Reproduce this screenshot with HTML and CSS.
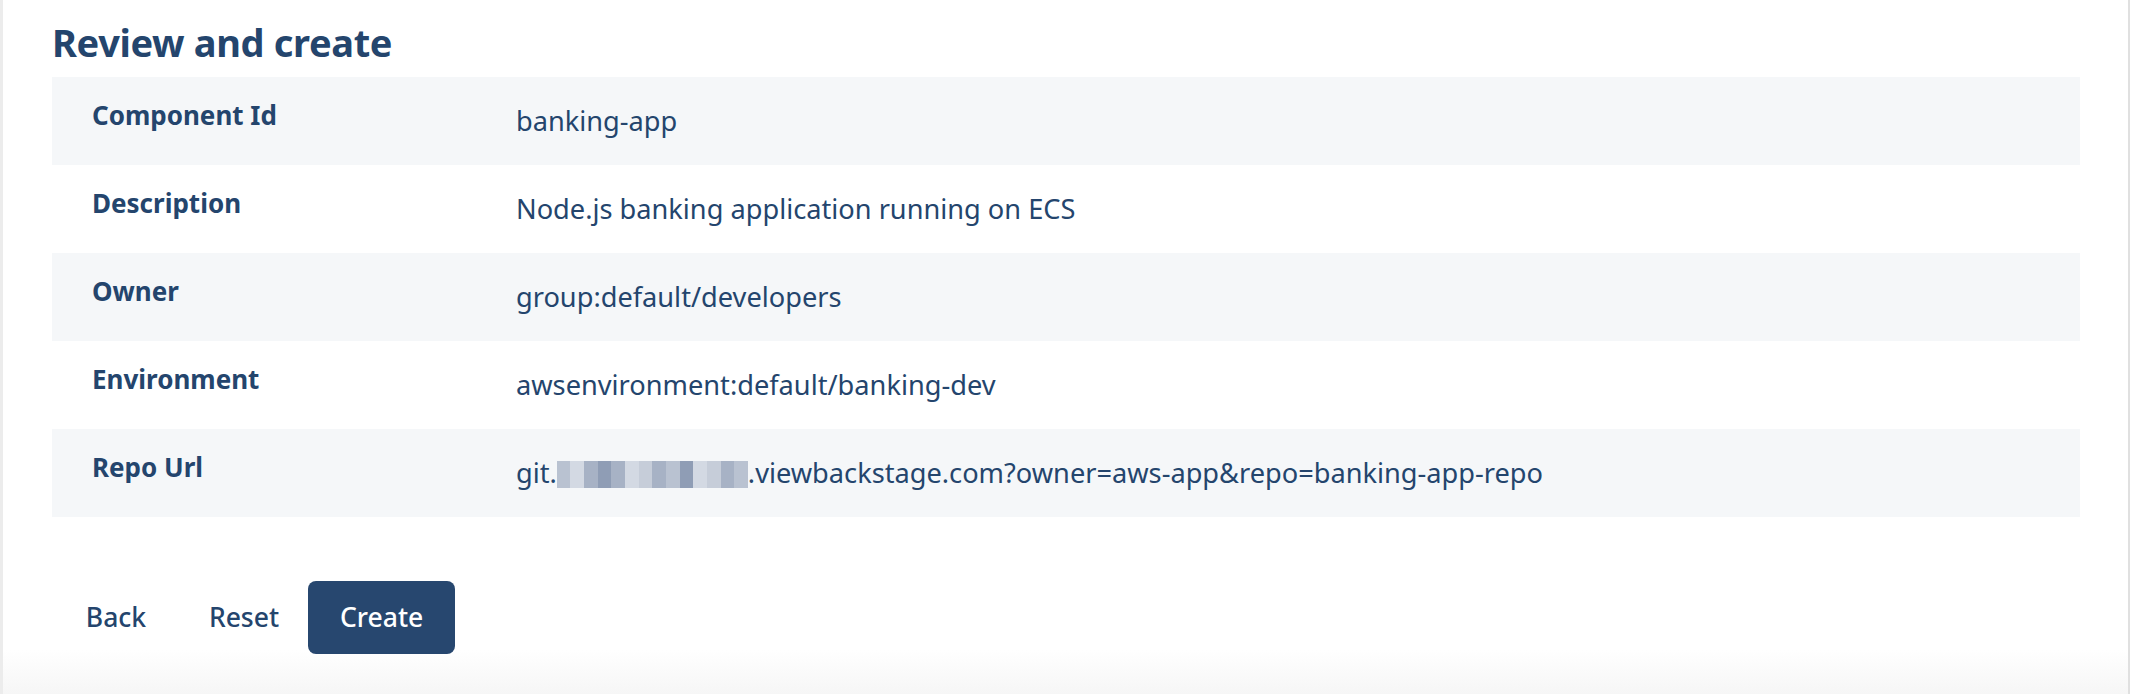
FILE: index.html
```html
<!DOCTYPE html>
<html lang="en">
<head>
<meta charset="utf-8">
<title>Review and create</title>
<link rel="stylesheet" href="styles.css">
</head>
<body>
<div class="card">
  <h2 class="title">Review and create</h2>
  <div class="table">
    <div class="row shaded">
      <div class="label">Component Id</div>
      <div class="value">banking-app</div>
    </div>
    <div class="row">
      <div class="label">Description</div>
      <div class="value">Node.js banking application running on ECS</div>
    </div>
    <div class="row shaded">
      <div class="label">Owner</div>
      <div class="value">group:default/developers</div>
    </div>
    <div class="row">
      <div class="label">Environment</div>
      <div class="value">awsenvironment:default/banking-dev</div>
    </div>
    <div class="row shaded">
      <div class="label">Repo Url</div>
      <div class="value">git.<span class="blur"><span class="px c1"></span><span class="px c2"></span><span class="px c3"></span><span class="px c4"></span><span class="px c3"></span><span class="px c2"></span><span class="px c5"></span><span class="px c3"></span><span class="px c1"></span><span class="px c4"></span><span class="px c2"></span><span class="px c5"></span><span class="px c3"></span><span class="px c1"></span></span>.viewbackstage.com?owner=aws-app&amp;repo=banking-app-repo</div>
    </div>
  </div>
  <div class="actions">
    <button class="btn text">Back</button>
    <button class="btn text">Reset</button>
    <button class="btn primary">Create</button>
  </div>
</div>
</body>
</html>
```
FILE: styles.css
```css
html, body {
  margin: 0;
  padding: 0;
}
body {
  font-family: "Noto Sans", "Open Sans", sans-serif;
  color: #24456d;
  background: #fff;
}
.card {
  box-sizing: border-box;
  min-height: 694px;
  border-left: 3px solid #ececec;
  border-right: 2px solid #e0e0e0;
  padding: 18px 48px 0 49px;
  background: linear-gradient(to bottom, #fff 0, #fff 650px, #f6f6f6 694px);
}
.title {
  margin: 0 0 11px;
  font-size: 38px;
  line-height: 48px;
  letter-spacing: -0.35px;
  font-weight: 700;
  color: #24456d;
}
.table {
  display: flex;
  flex-direction: column;
}
.row {
  display: grid;
  grid-template-columns: 464px 1fr;
  box-sizing: border-box;
  height: 88px;
  padding-top: 18px;
  align-items: start;
}
.row.shaded {
  background: #f5f7f9;
}
.label {
  padding-left: 40px;
  font-size: 26px;
  line-height: 40px;
  font-weight: 700;
}
.value {
  margin-top: 6px;
  font-size: 27.2px;
  line-height: 40px;
  white-space: nowrap;
}
.blur {
  display: inline-flex;
  vertical-align: -5px;
  height: 27px;
  width: 191px;
  background: #c8cfdb;
}
.px {
  flex: 1;
}
.c1 { background: #b9c2d1; }
.c2 { background: #d3d9e3; }
.c3 { background: #a7b2c5; }
.c4 { background: #8f9db5; }
.c5 { background: #c6cdd9; }
.actions {
  display: flex;
  margin-top: 64px;
}
.btn {
  font-family: "Noto Sans", "Open Sans", sans-serif;
  font-size: 26.5px;
  line-height: 49px;
  font-weight: 500;
  border: 0;
  border-radius: 8px;
  cursor: pointer;
}
.btn.text {
  min-width: 128px;
  padding: 12px 16px;
  background: transparent;
  color: #24456d;
}
.btn.primary {
  padding: 12px 32px;
  background: #27476f;
  color: #fff;
}
```
